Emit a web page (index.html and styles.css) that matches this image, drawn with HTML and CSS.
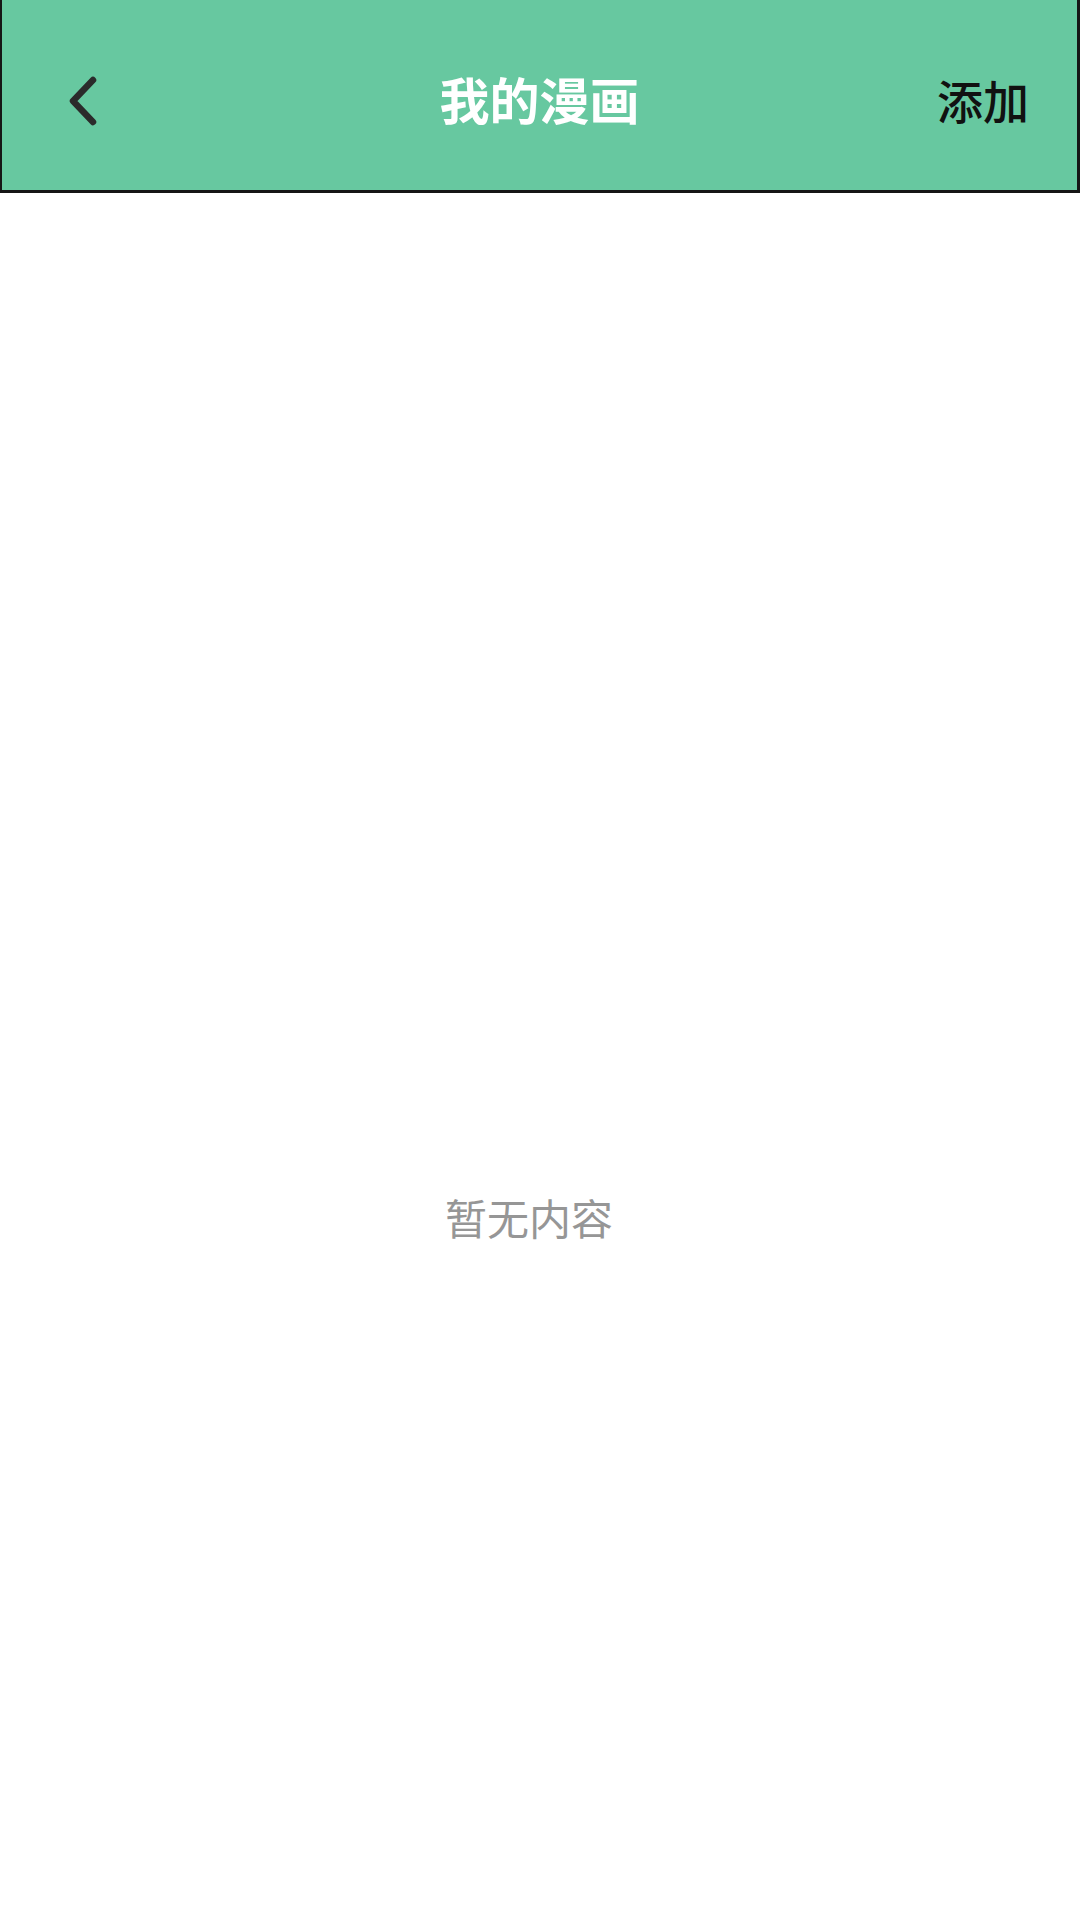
FILE: index.html
```html
<!DOCTYPE html>
<html lang="zh">
<head>
<meta charset="utf-8">
<link rel="stylesheet" href="styles.css">
</head>
<body>
<div class="app">
  <header class="topbar">
    <div class="back">
      <svg width="40" height="60" viewBox="0 0 40 60"><path d="M28 10 L8 31 L28 52" fill="none" stroke="#2b2b2b" stroke-width="6.5" stroke-linecap="round" stroke-linejoin="round"/></svg>
    </div>
    <h1 class="title">我的漫画</h1>
    <div class="add">添加</div>
  </header>
  <main class="content">
    <p class="empty">暂无内容</p>
  </main>
</div>
</body>
</html>
```
FILE: styles.css
```css
html, body {
  margin: 0;
  padding: 0;
  background: #ffffff;
}
body {
  font-family: "Noto Sans CJK SC", "Noto Sans", sans-serif;
}
.app {
  width: 1080px;
  height: 1920px;
  display: flex;
  flex-direction: column;
}
.topbar {
  box-sizing: border-box;
  height: 193px;
  background: #67c8a0;
  border-style: solid;
  border-color: #161616;
  border-width: 0 3px 3px 2px;
  display: flex;
  align-items: center;
  padding: 0 48px 0 63px;
  position: relative;
}
.back {
  width: 40px;
  height: 60px;
  display: flex;
  margin-top: 10px;
}
.title {
  position: absolute;
  left: 0;
  right: 0;
  top: 66px;
  margin: 0;
  text-align: center;
  font-size: 50px;
  font-weight: 700;
  color: #ffffff;
  line-height: 64px;
  pointer-events: none;
}
.add {
  margin-left: auto;
  margin-top: 8px;
  font-size: 46px;
  font-weight: 500;
  color: #111111;
  line-height: 60px;
}
.content {
  flex: 1;
  display: flex;
  justify-content: center;
}
.empty {
  margin: 999px 22px 0 0;
  font-size: 42px;
  line-height: 50px;
  color: #969696;
  height: 50px;
}
```
